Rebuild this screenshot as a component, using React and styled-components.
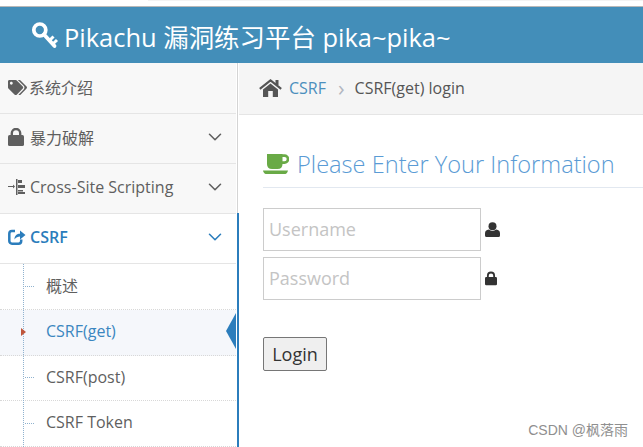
import React from 'react'
import styled, { createGlobalStyle } from 'styled-components'
import { FaTags } from 'react-icons/fa'
import { FiChevronDown } from 'react-icons/fi'

const GlobalStyle = createGlobalStyle`
  html, body {
    margin: 0;
    padding: 0;
    background: #fff;
    overflow: hidden;
  }
  body {
    font-family: "Open Sans", "Noto Sans CJK SC", sans-serif;
    color: #5f5f5f;
  }
  * { box-sizing: border-box; }
`

const KeyIcon = () => (
  <svg width="28" height="28" viewBox="0 0 28 28" fill="none" stroke="currentColor">
    <circle cx="8.8" cy="9" r="6" strokeWidth="3.7" />
    <path d="M13 13.5 L23.5 25" strokeWidth="3.8" strokeLinecap="round" />
    <path d="M18.5 19.5 L22.5 15.5 M21.8 23 L26 19" strokeWidth="3" />
  </svg>
)

const IndentIcon = () => (
  <svg width="18" height="16" viewBox="0 0 18 16" fill="currentColor">
    <rect x="0" y="7" width="5" height="1" />
    <path d="M5 5.5 L7 7.5 L5 9.5 Z" />
    <rect x="8" y="0" width="1.5" height="16" />
    <rect x="10" y="1" width="4" height="3" />
    <rect x="10" y="6" width="7" height="3" />
    <rect x="10" y="11" width="5" height="1.5" />
    <rect x="10" y="13" width="7" height="2" />
  </svg>
)

const LockIcon = ({ w, h }) => (
  <svg width={w} height={h} viewBox="0 0 16 18" fill="currentColor">
    <rect x="0" y="7" width="16" height="11" rx="1.6" />
    <path d="M3.8 8 V5.2 a4.2 4.2 0 0 1 8.4 0 V8" fill="none" stroke="currentColor" strokeWidth="2.4" />
  </svg>
)

const ShareIcon = () => (
  <svg width="18" height="16" viewBox="0 0 18 16" fill="currentColor">
    <path
      d="M7 2 H4 a2.7 2.7 0 0 0 -2.7 2.7 V12 a2.7 2.7 0 0 0 2.7 2.7 H10.5 a2.7 2.7 0 0 0 2.7 -2.7 V10.5"
      fill="none"
      stroke="currentColor"
      strokeWidth="2.5"
    />
    <path d="M6.5 10.5 C6.5 6.5 9 4.8 12 4.8 V1.5 L17.5 6 L12 10.5 V7.5 C10 7.5 8 8.2 6.5 10.5 Z" />
  </svg>
)

const HomeIcon = () => (
  <svg width="23" height="18" viewBox="0 0 23 18" fill="currentColor">
    <path d="M0.8 9.8 L11.5 1.4 L22.2 9.8" fill="none" stroke="currentColor" strokeWidth="2.1" />
    <rect x="16.5" y="1" width="3" height="5" />
    <path d="M4 10.5 L11.5 4.6 L19 10.5 V18 H13.8 V12 H9.2 V18 H4 Z" />
  </svg>
)

const CoffeeIcon = () => (
  <svg width="26" height="20" viewBox="0 0 26 20" fill="currentColor">
    <path d="M4 0 H19.5 V10 Q19.5 15 14.5 15 H9 Q4 15 4 10 Z" />
    <path d="M19 1.6 H21.5 a3.4 3.4 0 0 1 0 7 H19" fill="none" stroke="currentColor" strokeWidth="2.6" />
    <path d="M0 16.4 H25 Q24.4 20 21 20 H4 Q0.6 20 0 16.4 Z" />
  </svg>
)

const UserIcon = () => (
  <svg width="15" height="15" viewBox="0 0 15 15" fill="currentColor">
    <circle cx="7.5" cy="4.2" r="4" />
    <path d="M0 13.5 V11.5 Q0 8 3.8 7.6 Q7.5 10.4 11.2 7.6 Q15 8 15 11.5 V13.5 Q15 15 13.5 15 H1.5 Q0 15 0 13.5 Z" />
  </svg>
)

export default function App() {
  return (
    <Page>
      <GlobalStyle />
      <TopStrip />
      <Header>
        <KeyIcon />
        <span>Pikachu 漏洞练习平台 pika~pika~</span>
      </Header>
      <Body>
        <Sidebar>
          <ClosedSection>
            <NavItem>
              <NavIcon $flush><FaTags size={19} /></NavIcon>
              <NavLabel>系统介绍</NavLabel>
            </NavItem>
            <NavItem>
              <NavIcon><LockIcon w={16} h={18} /></NavIcon>
              <NavLabel>暴力破解</NavLabel>
              <Chevron><FiChevronDown size={22} strokeWidth={1.7} /></Chevron>
            </NavItem>
            <NavItem>
              <NavIcon><IndentIcon /></NavIcon>
              <NavLabel>Cross-Site Scripting</NavLabel>
              <Chevron><FiChevronDown size={22} strokeWidth={1.7} /></Chevron>
            </NavItem>
          </ClosedSection>
          <OpenSection>
            <NavItem $open>
              <NavIcon><ShareIcon /></NavIcon>
              <NavLabel>CSRF</NavLabel>
              <Chevron><FiChevronDown size={22} strokeWidth={1.7} /></Chevron>
            </NavItem>
            <SubMenu>
              <SubItem $height={46}>概述</SubItem>
              <SubItem $height={46} $active>CSRF(get)</SubItem>
              <SubItem $height={45}>CSRF(post)</SubItem>
              <SubItem $height={46}>CSRF Token</SubItem>
            </SubMenu>
          </OpenSection>
        </Sidebar>
        <Main>
          <Breadcrumb>
            <HomeIcon />
            <CrumbLink>CSRF</CrumbLink>
            <CrumbSep>›</CrumbSep>
            <span>CSRF(get) login</span>
          </Breadcrumb>
          <Content>
            <Title>
              <CoffeeIcon />
              <span>Please Enter Your Information</span>
            </Title>
            <Form onSubmit={e => e.preventDefault()}>
              <Field>
                <Input type="text" placeholder="Username" />
                <UserIcon />
              </Field>
              <Field>
                <Input type="password" placeholder="Password" />
                <LockIcon w={12} h={15} />
              </Field>
              <LoginBtn>Login</LoginBtn>
            </Form>
          </Content>
        </Main>
      </Body>
      <Watermark>CSDN @枫落雨</Watermark>
    </Page>
  )
}

const Page = styled.div`
  position: relative;
  width: 643px;
  height: 447px;
  overflow: hidden;
`

const TopStrip = styled.div`
  height: 6px;
  &::before {
    content: '';
    display: block;
    height: 1px;
    margin-left: 148px;
    background: #f3f3f3;
  }
`

const Header = styled.header`
  height: 57px;
  border-top: 1px solid #b8b8b8;
  background: #438eb9;
  color: #fff;
  display: flex;
  align-items: center;
  gap: 5px;
  padding-left: 31px;
  font-size: 25.45px;
`

const Body = styled.div`
  display: flex;
  height: 384px;
`

const Sidebar = styled.nav`
  width: 239px;
  flex: none;
  background: #fff;
`

const ClosedSection = styled.div`
  width: 238px;
  padding: 1px 1px 0 0;
  border-right: 1px solid #d4d4d4;
  background: linear-gradient(#f8f8f8 1px, #fff 1px);
`

const NavItem = styled.div`
  height: 50px;
  display: flex;
  align-items: center;
  padding: 0 10px 3px 8px;
  width: 236px;
  background: ${p => (p.$open ? '#fff' : '#f8f8f8')};
  border-bottom: 1px solid #e5e5e5;
  color: ${p => (p.$open ? '#2b7dbc' : 'inherit')};
  font-size: 16px;
  font-weight: ${p => (p.$open ? 600 : 400)};
`

const NavIcon = styled.span`
  width: ${p => (p.$flush ? '21px' : '22px')};
  display: flex;
  justify-content: flex-start;
`

const NavLabel = styled.span`
  flex: 1;
  white-space: nowrap;
`

const Chevron = styled.span`
  display: flex;
  color: inherit;
`

const OpenSection = styled.div`
  position: relative;
  &::after {
    content: '';
    position: absolute;
    top: -1px;
    bottom: 0;
    right: 0;
    width: 2px;
    background: #2b7dbc;
  }
`

const SubMenu = styled.ul`
  position: relative;
  list-style: none;
  margin: 0;
  padding: 0;
  width: 236px;
  &::before {
    content: '';
    position: absolute;
    z-index: 1;
    left: 23px;
    top: 0;
    bottom: 0;
    border-left: 1px dotted #8fb2cf;
  }
`

const SubItem = styled.li`
  position: relative;
  height: ${p => p.$height}px;
  display: flex;
  align-items: center;
  padding: 0 0 3px 46px;
  font-size: 16px;
  background: ${p => (p.$active ? '#f5f7fb' : '#fff')};
  color: ${p => (p.$active ? '#3a86c0' : 'inherit')};
  border-bottom: 1px dotted #d8d8d8;
  &::before {
    content: '';
    position: absolute;
    z-index: 2;
    left: ${p => (p.$active ? '21px' : '25px')};
    top: 50%;
    ${p =>
      p.$active
        ? `
      margin-top: -5px;
      border-left: 5px solid #c0563b;
      border-top: 4px solid transparent;
      border-bottom: 4px solid transparent;
    `
        : `
      width: 9px;
      margin-top: -1px;
      border-top: 1px dotted #8fb2cf;
    `}
  }
  &::after {
    content: '';
    display: ${p => (p.$active ? 'block' : 'none')};
    position: absolute;
    right: 0;
    top: 3px;
    border-right: 10px solid #2b7dbc;
    border-top: 18px solid transparent;
    border-bottom: 18px solid transparent;
  }
`

const Main = styled.main`
  flex: 1;
  min-width: 0;
`

const Breadcrumb = styled.div`
  height: 52px;
  display: flex;
  align-items: center;
  padding: 0 0 1px 20px;
  background: #f5f5f5;
  border-bottom: 1px solid #e5e5e5;
  font-size: 16px;
  color: #555;
`

const CrumbLink = styled.span`
  color: #4c8fbd;
  margin-left: 7px;
`

const CrumbSep = styled.span`
  color: #b2b6bf;
  font-size: 22px;
  margin: 0 10px 0 12px;
  padding-bottom: 3px;
  line-height: 1;
`

const Content = styled.div`
  padding: 32px 0 0 24px;
`

const Title = styled.h1`
  margin: 0;
  height: 41px;
  display: flex;
  align-items: center;
  gap: 8px;
  padding-bottom: 7px;
  border-bottom: 1px solid #e2e8f0;
  color: #5a9bd5;
  font-size: 23.6px;
  font-weight: 300;
  white-space: nowrap;
  svg { color: #69aa46; }
`

const Form = styled.form`
  display: flex;
  flex-direction: column;
  align-items: flex-start;
  gap: 6px;
  padding-top: 20px;
`

const Field = styled.div`
  display: flex;
  align-items: center;
  gap: 4px;
  color: #333;
`

const Input = styled.input`
  width: 218px;
  height: 43px;
  padding: 0 5px 2px;
  border: 1px solid #ccc;
  font: 18px "Open Sans", sans-serif;
  &::placeholder { color: #c4c4c4; opacity: 1; }
`

const LoginBtn = styled.button`
  margin-top: 31px;
  width: 64px;
  height: 34px;
  padding: 0;
  background: #efefef;
  border: 1px solid #767676;
  border-radius: 2px;
  font: 18px "Open Sans", sans-serif;
  color: #333;
`

const Watermark = styled.div`
  position: absolute;
  right: 15px;
  bottom: 8px;
  font: 14px "Liberation Sans", "Noto Sans CJK SC", sans-serif;
  color: #8f8f8f;
`
